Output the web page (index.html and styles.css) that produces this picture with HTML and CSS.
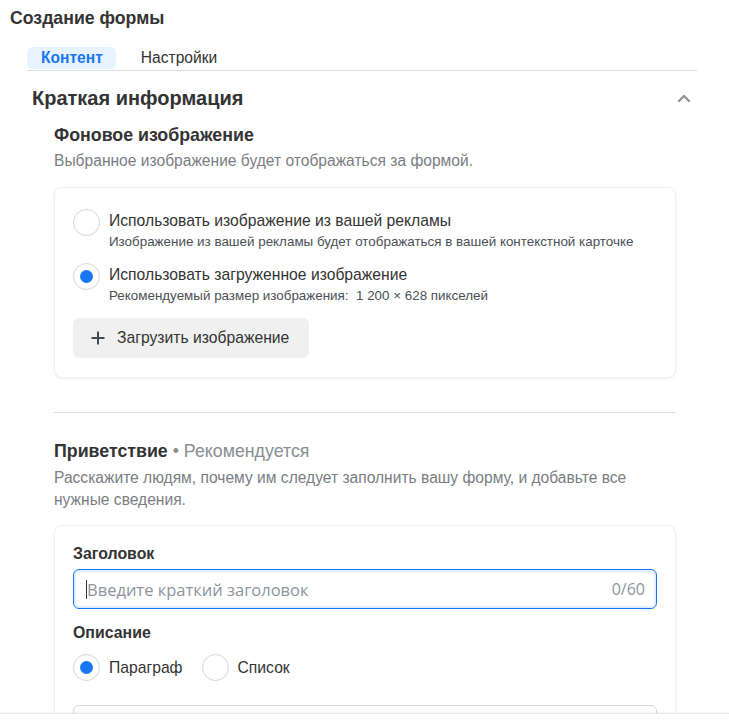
FILE: index.html
```html
<html>
<head>
<title>Создание формы</title>
<link rel="stylesheet" href="styles.css">
</head>
<body>
<div class="form-editor">

  <div class="editor-title">Создание формы</div>

  <div class="tabs">
    <button type="button" class="tab tab-active">Контент</button>
    <button type="button" class="tab">Настройки</button>
  </div>

  <div class="section">
    <div class="section-header">
      <span class="section-title">Краткая информация</span>
      <svg class="chevron" width="14" height="10" viewBox="0 0 14 10">
        <polyline points="2,8 7,3 12,8" fill="none" stroke="#8d949e" stroke-width="2.4" stroke-linecap="round" stroke-linejoin="round" />
      </svg>
    </div>

    <div class="section-body">

      <div class="block-title">Фоновое изображение</div>
      <div class="block-desc">Выбранное изображение будет отображаться за формой.</div>

      <div class="card card-image">
        <label class="option">
          <span class="radio"></span>
          <span class="option-text">
            <span class="option-label">Использовать изображение из вашей рекламы</span>
            <span class="option-hint">Изображение из вашей рекламы будет отображаться в вашей контекстной карточке</span>
          </span>
        </label>
        <label class="option">
          <span class="radio radio-checked"></span>
          <span class="option-text">
            <span class="option-label">Использовать загруженное изображение</span>
            <span class="option-hint">Рекомендуемый размер изображения:&nbsp; 1 200 × 628 пикселей</span>
          </span>
        </label>
        <button type="button" class="upload-btn">
          <svg width="16" height="16" viewBox="0 0 16 16">
            <path d="M8 1.5v13M1.5 8h13" stroke="#444950" stroke-width="2" fill="none" />
          </svg>
          Загрузить изображение
        </button>
      </div>

      <div class="divider"></div>

      <div class="block-title">Приветствие <span class="muted">• Рекомендуется</span></div>
      <div class="block-desc block-desc-wide">Расскажите людям, почему им следует заполнить вашу форму, и добавьте все нужные сведения.</div>

      <div class="card card-greeting">
        <div class="field-label">Заголовок</div>
        <div class="input input-focused">
          <span class="caret"></span>
          <span class="placeholder">Введите краткий заголовок</span>
          <span class="counter">0/60</span>
        </div>

        <div class="field-label field-label-gap">Описание</div>
        <div class="inline-options">
          <label class="option option-inline">
            <span class="radio radio-checked"></span>
            <span class="option-label">Параграф</span>
          </label>
          <label class="option option-inline">
            <span class="radio"></span>
            <span class="option-label">Список</span>
          </label>
        </div>

        <div class="textarea"></div>
      </div>

    </div>
  </div>
</div>

<div class="footer-bar"></div>
</body>
</html>
```

FILE: styles.css
```css
html, body {
  margin: 0;
  padding: 0;
  background: #fff;
  overflow: hidden;
}

body {
  font-family: "Liberation Sans", Arial, sans-serif;
  color: #333;
}

.form-editor {
  width: 729px;
}

.editor-title {
  padding: 8px 0 0 10px;
  font-size: 17.7px;
  line-height: 20px;
  font-weight: bold;
  color: #333;
}

.tabs {
  margin: 19px 32px 0 27px;
  padding-bottom: 1px;
  border-bottom: 1px solid #dadde1;
  display: flex;
  gap: 11px;
}

.tab {
  font-family: inherit;
  height: 22px;
  padding: 0 13px 0 14px;
  border: none;
  border-radius: 6px;
  background: transparent;
  font-size: 15.6px;
  color: #333;
  cursor: pointer;
}

.tab-active {
  background: #e7f3ff;
  color: #1877f2;
  font-weight: bold;
}

.section {
  margin: 15px 32px 0 32px;
}

.section-header {
  display: flex;
  align-items: center;
  justify-content: space-between;
  height: 24px;
  padding-right: 6px;
}

.section-title {
  font-size: 20px;
  line-height: 24px;
  font-weight: bold;
  color: #333;
}

.section-body {
  padding: 15px 0 0 22px;
  width: 622px;
}

.block-title {
  font-size: 17.8px;
  line-height: 20px;
  font-weight: bold;
  color: #333;
}

.muted {
  font-weight: normal;
  color: #8a8d91;
}

.block-desc {
  margin-top: 6px;
  font-size: 15.6px;
  line-height: 20px;
  color: #7a7d82;
}

.block-desc-wide {
  line-height: 22px;
}

.card {
  margin-top: 16px;
  border: 1px solid #eef0f2;
  border-radius: 8px;
  box-shadow: 0 1px 3px rgba(0,0,0,.06);
  background: #fff;
}

.card-image {
  padding: 21px 18px 19px;
  display: flex;
  flex-direction: column;
  gap: 12px;
  align-items: flex-start;
}

.option {
  display: flex;
  align-items: flex-start;
  gap: 9px;
  cursor: pointer;
}

.radio {
  box-sizing: border-box;
  width: 27px;
  height: 27px;
  border: 1px solid #d4d6da;
  border-radius: 50%;
  flex-shrink: 0;
  display: flex;
  align-items: center;
  justify-content: center;
}

.radio-checked::after {
  content: "";
  width: 13px;
  height: 13px;
  border-radius: 50%;
  background: #1877f2;
}

.option-text {
  display: flex;
  flex-direction: column;
  padding-top: 2px;
  margin-bottom: -1px;
}

.option-label {
  font-size: 15.7px;
  line-height: 20px;
  color: #333;
}

.option-hint {
  font-size: 13.4px;
  line-height: 21px;
  color: #4b4f56;
}

.upload-btn {
  margin-top: 1px;
  box-sizing: border-box;
  height: 40px;
  width: 236px;
  padding: 0 0 0 17px;
  border: none;
  border-radius: 6px;
  background: #f0f0f0;
  font-family: inherit;
  font-size: 15.7px;
  color: #333;
  display: flex;
  align-items: center;
  gap: 11px;
  cursor: pointer;
}

.divider {
  margin: 34px 0 28px;
  height: 1px;
  background: #dadde1;
}

.card-greeting {
  margin-top: 14px;
  padding: 19px 18px 40px;
}

.field-label {
  font-size: 15.9px;
  line-height: 18px;
  font-weight: bold;
  color: #333;
}

.field-label-gap {
  margin-top: 15px;
}

.input {
  box-sizing: border-box;
  margin-top: 6px;
  height: 40px;
  padding: 0 11px 0 12px;
  border-radius: 6px;
  display: flex;
  align-items: center;
}

.input-focused {
  border: 1px solid #1877f2;
  box-shadow: inset 0 0 0 2px #e3eefd;
}

.caret {
  width: 1px;
  height: 19px;
  background: #333;
}

.placeholder {
  flex: 1;
  font-family: "Open Sans", sans-serif;
  font-size: 16.5px;
  color: #8d949e;
}

.counter {
  font-family: "Open Sans", sans-serif;
  font-size: 16px;
  color: #8d949e;
}

.inline-options {
  margin-top: 12px;
  display: flex;
  gap: 19px;
}

.option-inline {
  align-items: center;
}

.textarea {
  margin-top: 24px;
  height: 90px;
  border: 1px solid #d4d6da;
  border-radius: 6px;
}

.footer-bar {
  position: fixed;
  left: 0;
  right: 0;
  bottom: 0;
  height: 6px;
  background: #fff;
  border-top: 1px solid #e6e6e6;
  box-shadow: 0 -1px 2px rgba(0,0,0,.04);
}
```
